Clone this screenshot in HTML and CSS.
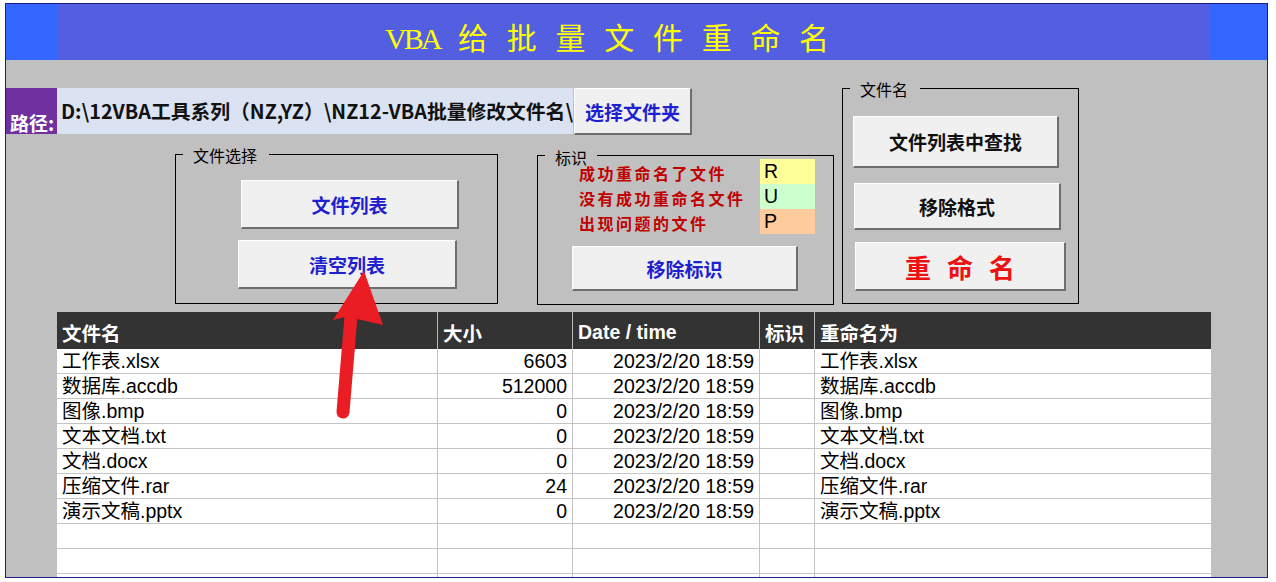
FILE: index.html
```html
<!DOCTYPE html>
<html lang="zh-CN">
<head>
<meta charset="utf-8">
<title>VBA 给批量文件重命名</title>
<link rel="stylesheet" href="styles.css">
</head>
<body>
<div class="frame">
  <header class="banner">
    <div class="banner-side"></div>
    <div class="banner-title"><span class="latin">VBA</span> 给 批 量 文 件 重 命 名</div>
    <div class="banner-side"></div>
  </header>

  <section class="controls">
    <div class="controls-left">
      <div class="path-row">
        <div class="path-label">路径:</div>
        <div class="path-field">D:\12VBA工具系列（NZ,YZ）\NZ12-VBA批量修改文件名\</div>
        <button class="btn btn-blue btn-folder">选择文件夹</button>
      </div>
      <div class="group-row">
        <div class="group group-files">
          <div class="group-title">文件选择</div>
          <button class="btn btn-blue btn-list">文件列表</button>
          <button class="btn btn-blue btn-clear">清空列表</button>
        </div>
        <div class="group group-marks">
          <div class="group-title group-title-tight">标识</div>
          <div class="mark-row"><span class="mark-label">成功重命名了文件</span><span class="mark-cell mark-r">R</span></div>
          <div class="mark-row"><span class="mark-label">没有成功重命名文件</span><span class="mark-cell mark-u">U</span></div>
          <div class="mark-row"><span class="mark-label">出现问题的文件</span><span class="mark-cell mark-p">P</span></div>
          <button class="btn btn-blue btn-unmark">移除标识</button>
        </div>
      </div>
    </div>
    <div class="group group-names">
      <div class="group-title">文件名</div>
      <button class="btn btn-black btn-find">文件列表中查找</button>
      <button class="btn btn-black btn-format">移除格式</button>
      <button class="btn btn-red btn-rename">重 命 名</button>
    </div>
  </section>

  <div class="table">
    <div class="th">文件名</div><div class="th">大小</div><div class="th th-latin">Date / time</div><div class="th">标识</div><div class="th">重命名为</div>

    <div class="td">工作表.xlsx</div><div class="td num">6603</div><div class="td num">2023/2/20 18:59</div><div class="td"></div><div class="td">工作表.xlsx</div>
    <div class="td">数据库.accdb</div><div class="td num">512000</div><div class="td num">2023/2/20 18:59</div><div class="td"></div><div class="td">数据库.accdb</div>
    <div class="td">图像.bmp</div><div class="td num">0</div><div class="td num">2023/2/20 18:59</div><div class="td"></div><div class="td">图像.bmp</div>
    <div class="td">文本文档.txt</div><div class="td num">0</div><div class="td num">2023/2/20 18:59</div><div class="td"></div><div class="td">文本文档.txt</div>
    <div class="td">文档.docx</div><div class="td num">0</div><div class="td num">2023/2/20 18:59</div><div class="td"></div><div class="td">文档.docx</div>
    <div class="td">压缩文件.rar</div><div class="td num">24</div><div class="td num">2023/2/20 18:59</div><div class="td"></div><div class="td">压缩文件.rar</div>
    <div class="td">演示文稿.pptx</div><div class="td num">0</div><div class="td num">2023/2/20 18:59</div><div class="td"></div><div class="td">演示文稿.pptx</div>
    <div class="td"></div><div class="td"></div><div class="td"></div><div class="td"></div><div class="td"></div>
    <div class="td"></div><div class="td"></div><div class="td"></div><div class="td"></div><div class="td"></div>
    <div class="td"></div><div class="td"></div><div class="td"></div><div class="td"></div><div class="td"></div>
  </div>

  <svg class="arrow" viewBox="6 4 1261 573" width="1261" height="573" aria-hidden="true">
    <polygon points="364,271 333,320 345,317 357,319 383,325" fill="#ea1c24"/>
    <line x1="351" y1="316" x2="343" y2="412" stroke="#ea1c24" stroke-width="13" stroke-linecap="round"/>
  </svg>
</div>
</body>
</html>
```

FILE: styles.css
```css
* {
  box-sizing: border-box;
}

body {
  margin: 0;
  background: #ffffff;
  font-family: "Liberation Sans", "Noto Sans CJK SC", sans-serif;
}

.frame {
  position: relative;
  margin: 3px 0 0 5px;
  width: 1263px;
  height: 575px;
  border: 1px solid #1c1c8a;
  background: #c0c0c0;
  overflow: hidden;
}

/* ---------- banner ---------- */
.banner {
  display: grid;
  grid-template-columns: 51px 1fr 57px;
  height: 56px;
}

.banner-side {
  background: #3366ff;
}

.banner-title {
  background: #535ee1;
  color: #ffff00;
  font-family: "Noto Sans CJK SC", sans-serif;
  font-size: 30px;
  line-height: 30px;
  padding: 17px 0 0 328px;
  word-spacing: 12px;
  white-space: nowrap;
}

.banner-title .latin {
  font-family: "Liberation Serif", serif;
  letter-spacing: -3px;
}

/* ---------- controls ---------- */
.controls {
  display: flex;
  align-items: flex-start;
  height: 252px;
  padding-top: 28px;
}

.controls-left {
  width: 828px;
}

.path-row {
  display: flex;
  align-items: flex-start;
  height: 46px;
}

.path-label {
  width: 51px;
  height: 46px;
  background: #7030a0;
  color: #ffffff;
  font-family: "Noto Sans CJK SC", sans-serif;
  font-weight: 700;
  font-size: 19px;
  line-height: 22px;
  padding: 24px 0 0 4px;
  white-space: nowrap;
}

.path-field {
  width: 516px;
  height: 46px;
  background: #dbe3f3;
  color: #111111;
  font-family: "Noto Sans CJK SC", sans-serif;
  font-weight: 700;
  font-size: 19.8px;
  line-height: 46px;
  padding-left: 4px;
  white-space: nowrap;
  overflow: hidden;
}

.btn {
  display: flex;
  align-items: center;
  justify-content: center;
  padding: 0;
  background: #f0f0f0;
  border-style: solid;
  border-width: 1px 2px 2px 1px;
  border-color: #ffffff #6e6e6e #6e6e6e #ffffff;
  font-family: "Noto Sans CJK SC", sans-serif;
  font-weight: 700;
  font-size: 19px;
  white-space: nowrap;
}

.btn-blue { color: #1f1fd0; }
.btn-black { color: #111111; }
.btn-red {
  color: #ee1111;
  font-size: 26px;
  word-spacing: 10px;
}

.btn-folder {
  margin-left: 1px;
  width: 118px;
  height: 47px;
}

.group-row {
  display: flex;
  align-items: flex-start;
  margin-top: 20px;
}

.group {
  border: 1px solid #000000;
}

.group-title {
  width: fit-content;
  margin: -9px 0 -9px 7px;
  padding: 0 12px 0 10px;
  background: #c0c0c0;
  font-family: "Noto Sans CJK SC", sans-serif;
  font-size: 16px;
  line-height: 18px;
  height: 18px;
  color: #000000;
}

.group-title-tight {
  margin: -10px 0 -6px 7px;
  line-height: 16px;
  height: 16px;
  padding: 0 10px 0 10px;
}

.group-files {
  margin-left: 169px;
  width: 323px;
  height: 150px;
}

.btn-list {
  margin: 25px 0 0 65px;
  width: 218px;
  height: 49px;
}

.btn-clear {
  margin: 11px 0 0 62px;
  width: 219px;
  height: 49px;
}

.group-marks {
  margin: 1px 0 0 39px;
  width: 297px;
  height: 150px;
  padding-top: 3px;
}

.mark-row {
  display: flex;
  height: 25px;
  padding-left: 41px;
}

.mark-label {
  width: 181px;
  color: #c00000;
  font-family: "Noto Sans CJK SC", sans-serif;
  font-weight: 700;
  font-size: 16px;
  letter-spacing: 2.5px;
  line-height: 20px;
  padding-top: 4px;
  white-space: nowrap;
}

.mark-cell {
  width: 55px;
  padding-left: 4px;
  font-size: 19.5px;
  line-height: 25px;
  color: #000000;
}

.mark-r { background: #ffff99; }
.mark-u { background: #ccffcc; }
.mark-p { background: #fdcb9c; }

.btn-unmark {
  margin: 12px 0 0 34px;
  width: 226px;
  height: 45px;
}

.group-names {
  margin-left: 8px;
  width: 237px;
  height: 216px;
}

.btn-find {
  margin: 27px 0 0 10px;
  width: 206px;
  height: 52px;
}

.btn-format {
  margin: 15px 0 0 11px;
  width: 207px;
  height: 47px;
}

.btn-rename {
  margin: 12px 0 0 12px;
  width: 211px;
  height: 49px;
}

/* ---------- table ---------- */
.table {
  display: grid;
  grid-template-columns: 381px 135px 187px 55px 396px;
  width: 1154px;
  margin-left: 51px;
  background: #ffffff;
}

.th {
  height: 37px;
  background: #333333;
  color: #ffffff;
  font-family: "Noto Sans CJK SC", sans-serif;
  font-weight: 700;
  font-size: 19.5px;
  line-height: 37px;
  padding: 2px 0 0 5px;
  border-right: 1px solid #b8b8b8;
  white-space: nowrap;
}

.th-latin {
  font-family: "Liberation Sans", sans-serif;
}

.th:nth-child(5n) {
  border-right: none;
}

.td {
  height: 25px;
  padding: 0 5px;
  font-size: 19.5px;
  line-height: 24px;
  color: #000000;
  border-bottom: 1px solid #c4c4c4;
  border-right: 1px solid #c4c4c4;
  white-space: nowrap;
  overflow: hidden;
}

.td:nth-child(5n) {
  border-right: none;
}

.num {
  text-align: right;
}

/* ---------- annotation arrow ---------- */
.arrow {
  position: absolute;
  left: 0;
  top: 0;
  pointer-events: none;
}
```
